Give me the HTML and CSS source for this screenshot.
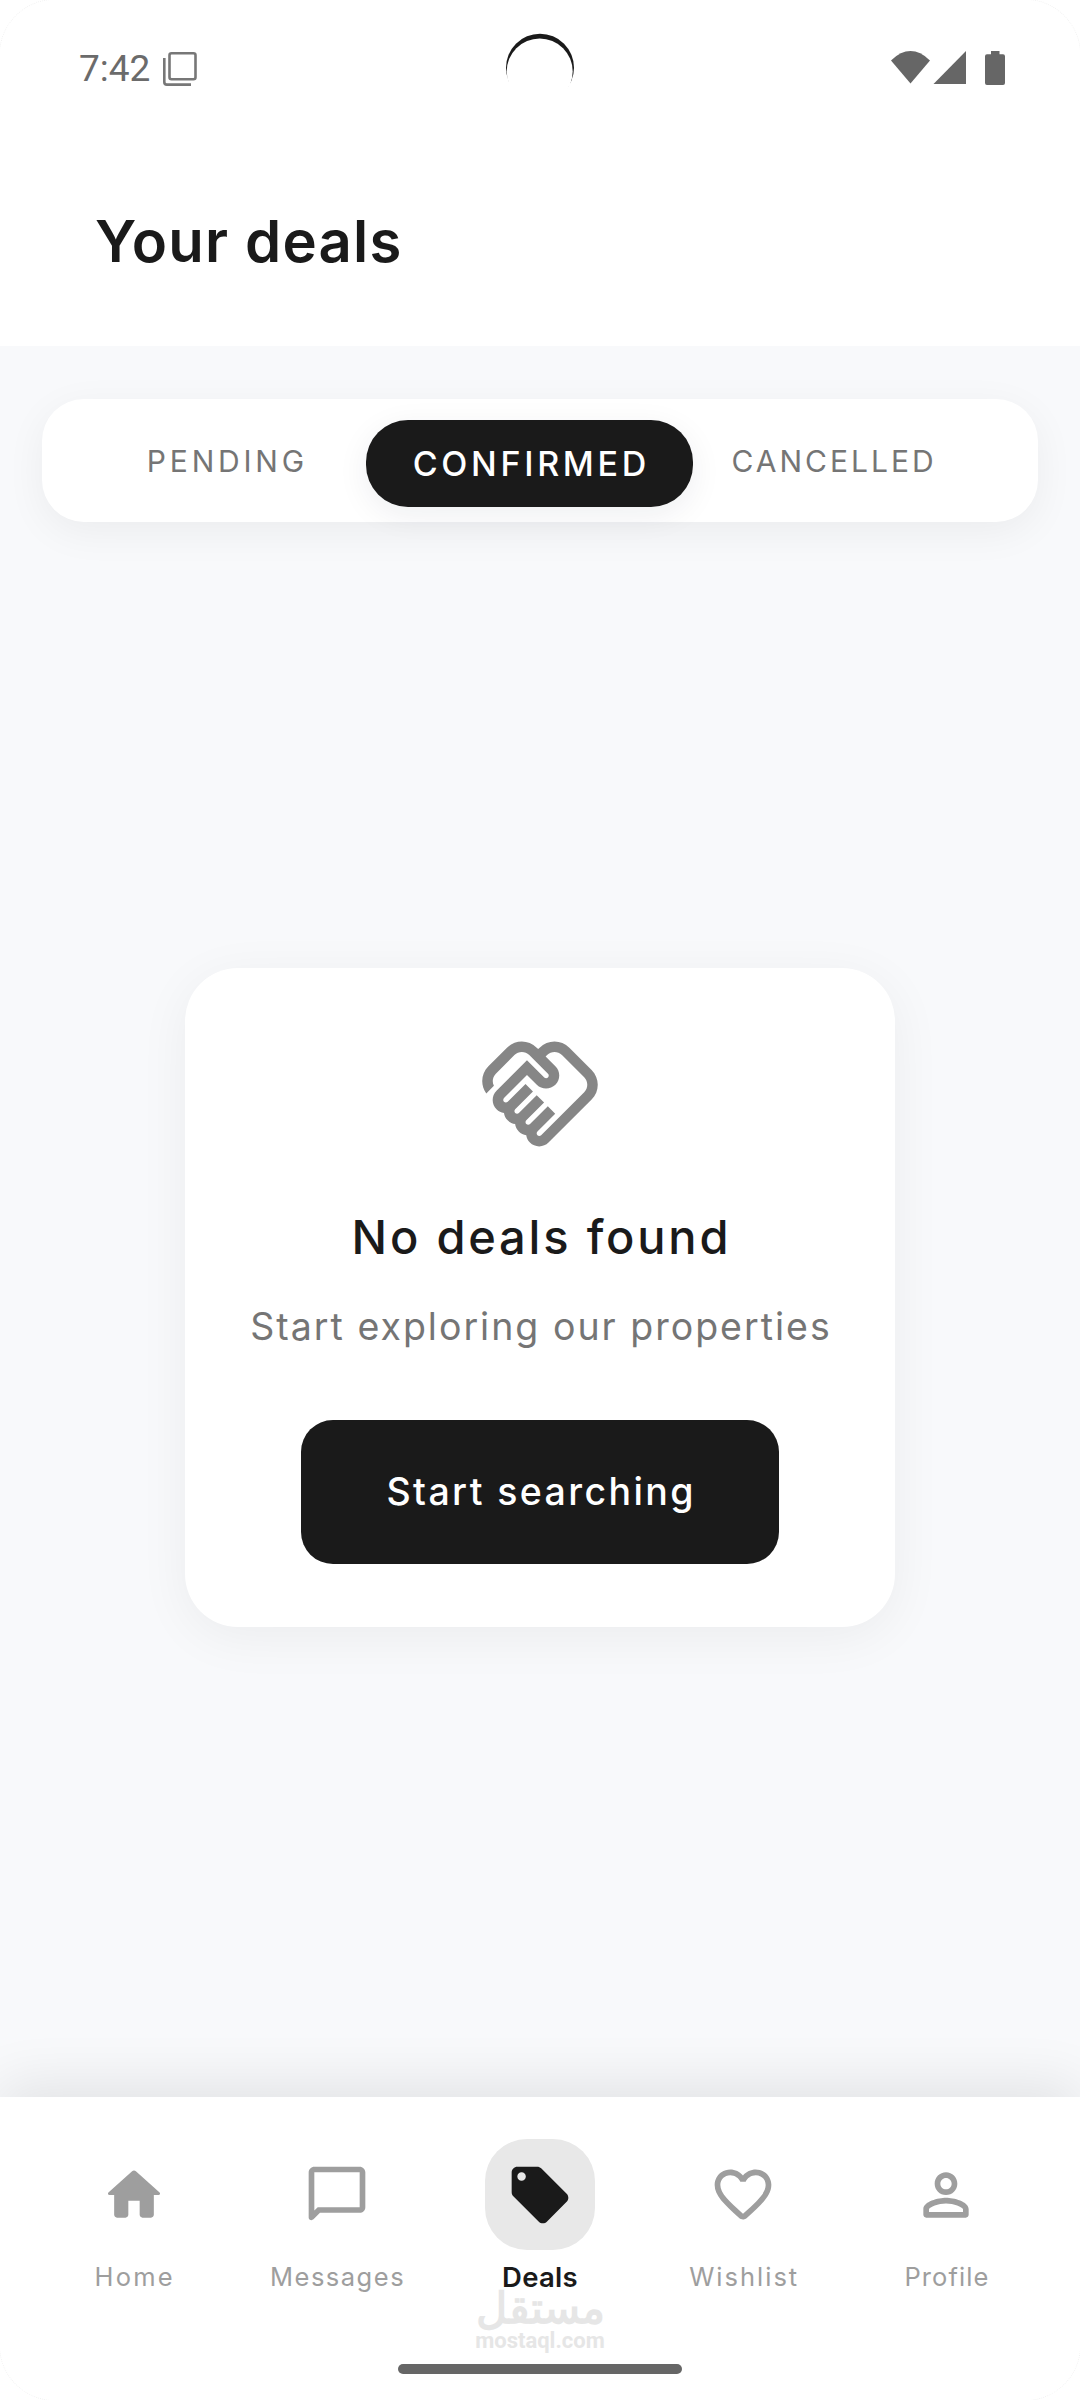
FILE: index.html
```html
<!DOCTYPE html>
<html lang="en">
<head>
<meta charset="utf-8">
<title>Your deals</title>
<link rel="stylesheet" href="styles.css">
</head>
<body>
<div class="screen">
  <div class="status">
    <span class="clock">7:42</span>
    <svg class="status-copy" width="34" height="34" viewBox="0 0 34 34" fill="none" stroke="#777" stroke-width="2.6"><rect x="6.5" y="1.3" width="26" height="26" rx="2"/><path d="M1.3 6v24a2.6 2.6 0 0 0 2.6 2.6H28"/></svg>
    <svg class="status-camera" width="72" height="72" viewBox="0 0 72 72"><circle cx="36" cy="34.700" r="34" fill="#1a1a1a"/><circle cx="35.700" cy="38.500" r="33" fill="#fff"/></svg>
    <svg class="status-icons" width="114" height="34" viewBox="0 0 114 34" fill="#666"><path d="M0 9.500Q19.500 -9.300 39 9.500L19.500 32.500z"/><path d="M75 0v33H42.500z"/><path d="M100 0h8.500v3.300h3.500q2 0 2 2V32q0 2-2 2H96q-2 0-2-2V5.300q0-2 2-2h4z"/></svg>
  </div>

  <header class="header"><h1 class="title">Your deals</h1></header>

  <main class="main">
    <div class="tabs">
      <div class="tab tab-pending"><span class="tab-text">PENDING</span></div>
      <div class="tab tab-active"><span class="tab-text tab-text-active">CONFIRMED</span></div>
      <div class="tab tab-cancelled"><span class="tab-text tab-text-cancelled">CANCELLED</span></div>
    </div>

    <section class="empty">
      <svg class="empty-icon" viewBox="0 0 24 24" fill="#868686"><path d="M12.22,19.85c-0.18,0.18-0.5,0.21-0.71,0c-0.18-0.18-0.21-0.5,0-0.71l3.39-3.39l-1.41-1.41l-3.39,3.39c-0.19,0.2-0.51,0.19-0.71,0c-0.21-0.21-0.18-0.53,0-0.71l3.39-3.39l-1.41-1.41l-3.39,3.39c-0.18,0.18-0.5,0.21-0.71,0c-0.19-0.19-0.19-0.51,0-0.71l3.39-3.39L9.24,10.1l-3.39,3.39c-0.18,0.18-0.5,0.21-0.71,0c-0.19-0.2-0.19-0.51,0-0.71L9.52,8.4l1.87,1.86c0.95,0.95,2.59,0.94,3.54,0c0.98-0.98,0.98-2.56,0-3.54l-1.86-1.86l0.28-0.28c0.78-0.78,2.05-0.78,2.83,0l4.24,4.24c0.78,0.78,0.78,2.05,0,2.83L12.22,19.85z M21.83,13.07c1.56-1.56,1.56-4.09,0-5.66l-4.24-4.24c-1.56-1.56-4.09-1.56-5.66,0l-0.28,0.28l-0.28-0.28c-1.56-1.56-4.09-1.56-5.66,0L2.17,6.71c-1.42,1.42-1.55,3.63-0.4,5.19l1.45-1.45C2.83,9.7,2.96,8.75,3.59,8.12l3.54-3.54c0.78-0.78,2.05-0.78,2.83,0l3.56,3.56c0.18,0.18,0.21,0.5,0,0.71c-0.21,0.21-0.53,0.18-0.71,0L9.52,5.57l-5.8,5.79c-0.98,0.97-0.98,2.56,0,3.54c0.39,0.39,0.89,0.63,1.42,0.7c0.07,0.52,0.3,1.02,0.7,1.42c0.4,0.4,0.9,0.63,1.42,0.7c0.07,0.52,0.3,1.02,0.7,1.42c0.4,0.4,0.9,0.63,1.42,0.7c0.07,0.54,0.31,1.03,0.7,1.42c0.47,0.47,1.1,0.73,1.77,0.73c0.67,0,1.3-0.26,1.77-0.73L21.83,13.07z"/></svg>
      <h2 class="empty-title">No deals found</h2>
      <p class="empty-text">Start exploring our properties</p>
      <button class="button"><span class="button-text">Start searching</span></button>
    </section>
  </main>

  <nav class="nav">
    <div class="nav-item">
      <span class="nav-pill"><svg class="nav-icon" viewBox="0 0 24 24"><path d="M10 19v-5h4v5c0 .55.45 1 1 1h3c.55 0 1-.45 1-1v-7h1.700c.46 0 .68-.57.33-.87L12.670 3.600c-.38-.34-.96-.34-1.340 0l-8.360 7.530c-.34.3-.13.87.33.87H5v7c0 .55.45 1 1 1h3c.55 0 1-.45 1-1z"/></svg></span>
      <span class="nav-label nav-home">Home</span>
    </div>
    <div class="nav-item">
      <span class="nav-pill"><svg class="nav-icon" viewBox="0 0 24 24"><path fill-rule="evenodd" d="M20 2H4c-1.100 0-2 .9-2 2v15.900c0 .9 1.050 1.300 1.700.7L6 18.300h14c1.100 0 2-.9 2-2V4c0-1.100-.9-2-2-2zM20 16.300H5.200L4 17.500V4h16z"/></svg></span>
      <span class="nav-label nav-messages">Messages</span>
    </div>
    <div class="nav-item nav-active">
      <span class="nav-pill"><svg class="nav-icon" viewBox="0 0 24 24"><path d="M21.410 11.580l-9-9C12.050 2.220 11.550 2 11 2H4c-1.100 0-2 .9-2 2v7c0 .55.22 1.050.59 1.420l9 9c.36.36.86.58 1.410.58s1.050-.22 1.410-.59l7-7c.37-.36.59-.86.59-1.410s-.23-1.060-.59-1.420zM5.500 7C4.670 7 4 6.330 4 5.500S4.670 4 5.500 4 7 4.670 7 5.500 6.330 7 5.500 7z"/></svg></span>
      <span class="nav-label nav-deals">Deals</span>
    </div>
    <div class="nav-item">
      <span class="nav-pill"><svg class="nav-icon" viewBox="0 0 24 24"><path d="M19.660 3.990c-2.640-1.800-5.900-.96-7.660 1.100-1.760-2.060-5.020-2.910-7.660-1.100-1.400.96-2.280 2.580-2.340 4.290-.14 3.880 3.300 6.990 8.550 11.760l.1.09c.76.69 1.930.69 2.690-.01l.11-.1c5.250-4.760 8.680-7.870 8.550-11.750-.06-1.700-.94-3.320-2.340-4.280zM12.100 18.550l-.1.1-.1-.1C7.140 14.240 4 11.390 4 8.500 4 6.500 5.500 5 7.500 5c1.540 0 3.040.99 3.570 2.360h1.870C13.460 5.990 14.960 5 16.500 5c2 0 3.500 1.500 3.500 3.500 0 2.890-3.140 5.740-7.900 10.050z"/></svg></span>
      <span class="nav-label nav-wishlist">Wishlist</span>
    </div>
    <div class="nav-item">
      <span class="nav-pill"><svg class="nav-icon" viewBox="0 0 24 24"><path d="M12 6c1.100 0 2 .9 2 2s-.9 2-2 2-2-.9-2-2 .9-2 2-2m0 9c2.700 0 5.800 1.290 6 2v1H6v-.99c.2-.72 3.300-2.010 6-2.010m0-11C9.790 4 8 5.790 8 8s1.790 4 4 4 4-1.790 4-4-1.790-4-4-4zm0 9c-2.670 0-8 1.340-8 4v2c0 .55.45 1 1 1h14c.55 0 1-.45 1-1v-2c0-2.660-5.330-4-8-4z"/></svg></span>
      <span class="nav-label nav-profile">Profile</span>
    </div>
  </nav>

  <div class="watermark"><span class="watermark-ar" lang="ar">مستقل</span><span class="watermark-en">mostaql.com</span></div>
  <div class="gesture"></div>
  <div class="corners"></div>
</div>
</body>
</html>
```
FILE: styles.css
```css
* { box-sizing: border-box; }
body { margin: 0; font-family: Inter, "Noto Sans", sans-serif; color: #1a1a1a; }
h1, h2, p { margin: 0; }

.screen {
  position: relative;
  display: flex;
  flex-direction: column;
  width: 1080px;
  height: 2400px;
  overflow: hidden;
  background: #f8f9fb;
}

/* Status bar */
.status {
  position: relative;
  display: flex;
  align-items: center;
  height: 138px;
  padding: 0 75px 0 79px;
  background: #fff;
}
.clock { font: 37px/44px Roboto, sans-serif; color: #6b6b6b; }
.status-copy { margin-left: 13px; }
.status-camera { position: absolute; left: 504px; top: 33px; }
.status-icons { margin-left: auto; margin-top: -3px; }

.header { height: 208px; padding: 68px 0 0 95px; background: #fff; }
.title { font-size: 58px; line-height: 70px; font-weight: 600; letter-spacing: 1.2px; }

/* Filter tabs */
.main { flex: 1; display: flex; flex-direction: column; align-items: center; padding-top: 53px; }
.tabs {
  display: flex;
  align-items: center;
  width: 996px;
  height: 123px;
  border-radius: 42px;
  background: #fff;
  box-shadow: 0 10px 40px rgba(0, 0, 0, .055);
}
.tab { display: flex; justify-content: center; align-items: center; }
.tab-pending { width: 324px; padding-left: 43px; }
.tab-cancelled { width: 345px; padding-right: 66px; }
.tab-active {
  width: 327px;
  height: 87px;
  margin-top: 6px;
  border-radius: 42px;
  background: #1a1a1a;
  box-shadow: 0 8px 32px rgba(20, 30, 60, .07);
}
.tab-text { font-size: 30px; line-height: 36px; letter-spacing: 3.8px; margin: 1px -3.8px 0 0; color: #757575; }
.tab-text-active { font-size: 34px; font-weight: 500; letter-spacing: 3.7px; margin: 0 -3.7px 0 0; color: #fff; }
.tab-text-cancelled { letter-spacing: 3px; margin-right: -3px; }

/* Empty state card */
.empty {
  display: flex;
  flex-direction: column;
  align-items: center;
  width: 710px;
  height: 659px;
  margin-top: 446px;
  padding-top: 63px;
  border-radius: 53px;
  background: #fff;
  box-shadow: 0 10px 52px rgba(0, 0, 0, .055);
}
.empty-icon { width: 126px; height: 126px; }
.empty-title { margin: 50px -2.8px 0 0; font-size: 47px; line-height: 60px; font-weight: 500; letter-spacing: 2.8px; }
.empty-text { margin: 35px -2px 0 0; font-size: 37.5px; line-height: 50px; letter-spacing: 2px; color: #757575; }
.button {
  display: flex;
  align-items: center;
  justify-content: center;
  width: 478px;
  height: 144px;
  margin-top: 68px;
  padding: 0;
  border: 0;
  border-radius: 32px;
  background: #1a1a1a;
  color: #fff;
  font: 500 37.5px/50px Inter, "Noto Sans", sans-serif;
}
.button-text { letter-spacing: 2.4px; margin-right: -2.4px; }

/* Bottom navigation */
.nav {
  display: grid;
  grid-template-columns: repeat(5, 1fr);
  height: 303px;
  padding: 42px 32px 0;
  background: #fff;
  box-shadow: 0 -13px 52px rgba(0, 0, 0, .09);
}
.nav-item { display: flex; flex-direction: column; align-items: center; color: #9e9e9e; }
.nav-pill { display: flex; align-items: center; justify-content: center; width: 110px; height: 111px; border-radius: 42px; }
.nav-icon { width: 68px; height: 68px; fill: currentColor; }
.nav-label { margin-top: 11px; font-size: 25.5px; line-height: 32px; }
.nav-active { color: #1a1a1a; }
.nav-active .nav-pill { background: #e8e8e8; }
.nav-home { letter-spacing: 2.2px; margin-right: -2.2px; }
.nav-messages { letter-spacing: 1.5px; margin-right: -1.5px; }
.nav-deals { font-size: 27.5px; font-weight: 600; letter-spacing: .3px; }
.nav-wishlist { letter-spacing: 2px; margin-right: -2px; }
.nav-profile { letter-spacing: 1.1px; margin-right: -1.1px; }

/* Overlays */
.watermark {
  position: absolute;
  left: 440px;
  top: 2286px;
  width: 200px;
  display: flex;
  flex-direction: column;
  align-items: center;
  color: #e6e6e6;
}
.watermark-ar { font: 700 43px/44px Roboto, sans-serif; }
.watermark-en { margin-top: -1px; font: 700 22px/24px Roboto, sans-serif; }
.gesture { position: absolute; left: 398px; bottom: 26px; width: 284px; height: 10px; border-radius: 5px; background: #666; }
.corners { position: absolute; inset: -1px; border: 1px dotted #f2f2f2; border-radius: 56px; pointer-events: none; }
```
